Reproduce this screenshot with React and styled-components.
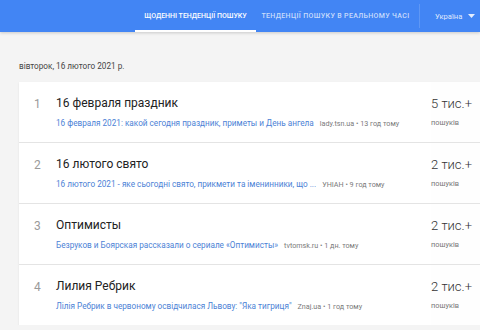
import styled, { createGlobalStyle } from 'styled-components';

const Global = createGlobalStyle`
 html, body {
  margin: 0;
  padding: 0;
  background: #f4f4f4;
  overflow: hidden;
  font-family: Roboto, "Noto Sans", Arial, sans-serif;
 }
`;

const Header = {
 Bar: styled.div`
  height: 32px;
  background: #4285f4;
  display: flex;
  align-items: stretch;
  padding-left: 135px;
  box-shadow: 0 1px 3px rgba(0, 0, 0, 0.18);
  position: relative;
  z-index: 1;
 `,
 Tab: styled.div`
  width: ${(p) => p.w}px;
  display: flex;
  align-items: center;
  justify-content: center;
  font-size: 7px;
  font-weight: 500;
  letter-spacing: ${(p) => (p.active ? '0' : '0.35px')};
  color: ${(p) => (p.active ? '#fff' : 'rgba(255,255,255,0.72)')};
  border-bottom: 2px solid ${(p) => (p.active ? '#fff' : 'transparent')};
  box-sizing: border-box;
  padding-top: 2px;
  white-space: nowrap;
 `,
 Divider: styled.div`
  width: 1px;
  margin: 4px 0 4px 4px;
  background: rgba(255, 255, 255, 0.15);
 `,
 Country: styled.div`
  display: flex;
  align-items: center;
  gap: 6px;
  padding-left: 15px;
  font-size: 7.6px;
  color: rgba(255, 255, 255, 0.85);
  white-space: nowrap;
 `,
};

const Page = styled.div`
 padding: 29px 0 0 19px;
`;

const DateLine = styled.div`
 font-size: 8.2px;
 color: #444;
 height: 21px;
`;

const Card = styled.div`
 width: 470px;
 background: #fff;
 box-shadow: 0 1px 2px rgba(0, 0, 0, 0.08);
`;

const Row = {
 Wrap: styled.div`
  display: grid;
  grid-template-columns: 37px 1fr 58px;
  height: 60px;
  border-top: ${(p) => (p.first ? 'none' : '1px solid #e4e4e4')};
 `,
 Num: styled.div`
  padding-top: 15px;
  padding-left: 15px;
  font-size: 12px;
  color: #9a9a9a;
 `,
 Body: styled.div`
  padding-top: 14px;
  min-width: 0;
 `,
 Title: styled.div`
  font-size: 12px;
  color: #222;
  line-height: 15px;
 `,
 Sub: styled.div`
  margin-top: 7px;
  font-size: 7.2px;
  white-space: nowrap;
  color: #7a7a7a;
 `,
 Link: styled.span`
  font-size: 8.2px;
  color: #4c82d6;
  margin-right: 6px;
 `,
 Count: styled.div`
  padding-top: 13px;
  background: #fefefe;
 `,
 Big: styled.div`
  font-size: 13px;
  font-weight: 300;
  color: #333;
  line-height: 17px;
 `,
 Small: styled.div`
  margin-top: 6px;
  font-size: 7.4px;
  color: #777;
 `,
};

const items = [
 {
  title: '16 февраля праздник',
  link: '16 февраля 2021: какой сегодня праздник, приметы и День ангела',
  source: 'lady.tsn.ua • 13 год тому',
  count: '5 тис.+',
 },
 {
  title: '16 лютого свято',
  link: '16 лютого 2021 - яке сьогодні свято, прикмети та іменинники, що ...',
  source: 'УНІАН • 9 год тому',
  count: '2 тис.+',
 },
 {
  title: 'Оптимисты',
  link: 'Безруков и Боярская рассказали о сериале «Оптимисты»',
  source: 'tvtomsk.ru • 1 дн. тому',
  count: '2 тис.+',
 },
 {
  title: 'Лилия Ребрик',
  link: 'Лілія Ребрик в червоному освідчилася Львову: "Яка тигриця"',
  source: 'Znaj.ua • 1 год тому',
  count: '2 тис.+',
 },
];

export default function App() {
 return (
  <>
   <Global />
   <Header.Bar>
    <Header.Tab active w={121}>ЩОДЕННІ ТЕНДЕНЦІЇ ПОШУКУ</Header.Tab>
    <Header.Tab w={159}>ТЕНДЕНЦІЇ ПОШУКУ В РЕАЛЬНОМУ ЧАСІ</Header.Tab>
    <Header.Divider />
    <Header.Country>
     Україна
     <svg width="7" height="4" viewBox="0 0 7 4">
      <path d="M0 0h7L3.5 4z" fill="rgba(255,255,255,0.85)" />
     </svg>
    </Header.Country>
   </Header.Bar>
   <Page>
    <DateLine>вівторок, 16 лютого 2021 р.</DateLine>
    <Card>
     {items.map((it, i) => (
      <Row.Wrap key={i} first={i === 0}>
       <Row.Num>{i + 1}</Row.Num>
       <Row.Body>
        <Row.Title>{it.title}</Row.Title>
        <Row.Sub>
         <Row.Link>{it.link}</Row.Link>
         {it.source}
        </Row.Sub>
       </Row.Body>
       <Row.Count>
        <Row.Big>{it.count}</Row.Big>
        <Row.Small>пошуків</Row.Small>
       </Row.Count>
      </Row.Wrap>
     ))}
    </Card>
   </Page>
  </>
 );
}
